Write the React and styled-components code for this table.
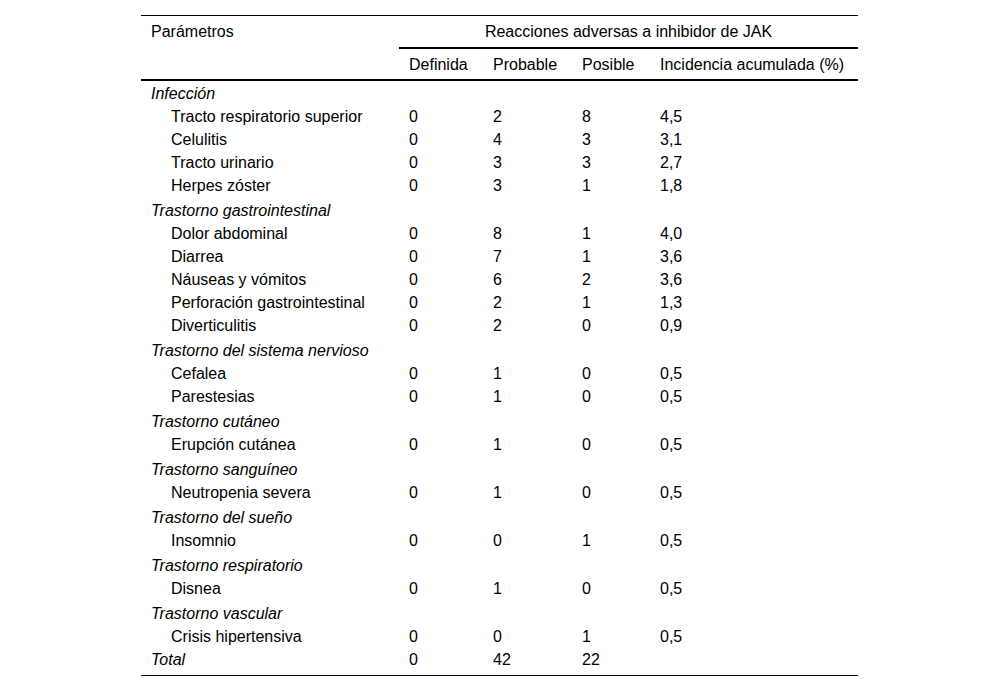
import React from 'react'
import styled, { createGlobalStyle } from 'styled-components'

const groups = [
    {
        name: 'Infección',
        items: [
            ['Tracto respiratorio superior', '0', '2', '8', '4,5'],
            ['Celulitis', '0', '4', '3', '3,1'],
            ['Tracto urinario', '0', '3', '3', '2,7'],
            ['Herpes zóster', '0', '3', '1', '1,8'],
        ],
    },
    {
        name: 'Trastorno gastrointestinal',
        items: [
            ['Dolor abdominal', '0', '8', '1', '4,0'],
            ['Diarrea', '0', '7', '1', '3,6'],
            ['Náuseas y vómitos', '0', '6', '2', '3,6'],
            ['Perforación gastrointestinal', '0', '2', '1', '1,3'],
            ['Diverticulitis', '0', '2', '0', '0,9'],
        ],
    },
    {
        name: 'Trastorno del sistema nervioso',
        items: [
            ['Cefalea', '0', '1', '0', '0,5'],
            ['Parestesias', '0', '1', '0', '0,5'],
        ],
    },
    {
        name: 'Trastorno cutáneo',
        items: [['Erupción cutánea', '0', '1', '0', '0,5']],
    },
    {
        name: 'Trastorno sanguíneo',
        items: [['Neutropenia severa', '0', '1', '0', '0,5']],
    },
    {
        name: 'Trastorno del sueño',
        items: [['Insomnio', '0', '0', '1', '0,5']],
    },
    {
        name: 'Trastorno respiratorio',
        items: [['Disnea', '0', '1', '0', '0,5']],
    },
    {
        name: 'Trastorno vascular',
        items: [['Crisis hipertensiva', '0', '0', '1', '0,5']],
    },
]

function App() {
    return (
        <>
            <GlobalStyle />
            <Table>
                <colgroup>
                    <col style={{ width: 258 }} />
                    <col style={{ width: 84 }} />
                    <col style={{ width: 89 }} />
                    <col style={{ width: 78 }} />
                    <col style={{ width: 208 }} />
                </colgroup>
                <thead>
                    <tr>
                        <HeadCell rowSpan={2}>Parámetros</HeadCell>
                        <HeadCell colSpan={4} $center>
                            Reacciones adversas a inhibidor de JAK
                        </HeadCell>
                    </tr>
                    <tr>
                        <SubHead>Definida</SubHead>
                        <SubHead>Probable</SubHead>
                        <SubHead>Posible</SubHead>
                        <SubHead>Incidencia acumulada (%)</SubHead>
                    </tr>
                </thead>
                <tbody>
                    {groups.map((g, gi) => (
                        <React.Fragment key={g.name}>
                            <tr>
                                <Cell colSpan={5} $italic $first={gi === 0}>{g.name}</Cell>
                            </tr>
                            {g.items.map((row) => (
                                <tr key={row[0]}>
                                    {row.map((v, i) => (
                                        <Cell key={i} $indent={i === 0}>{v}</Cell>
                                    ))}
                                </tr>
                            ))}
                        </React.Fragment>
                    ))}
                    <tr>
                        <Cell $italic $first $last>Total</Cell>
                        <Cell $last>0</Cell>
                        <Cell $last>42</Cell>
                        <Cell $last>22</Cell>
                        <Cell $last></Cell>
                    </tr>
                </tbody>
            </Table>
        </>
    )
}

export default App

const GlobalStyle = createGlobalStyle`
body{
    margin: 0;
    background: #fff;
    font-family: "Liberation Sans", Arial, sans-serif;
}
`

const Table = styled.table`
width: 717px;
margin: 15px 0 0 141px;
border-collapse: separate;
border-spacing: 0;
table-layout: fixed;
font-size: 16px;
line-height: 19px;
color: #000;
`

const HeadCell = styled.th`
font-weight: normal;
text-align: ${(p) => (p.$center ? 'center' : 'left')};
vertical-align: top;
padding: 6px 10px 6px;
border-top: 1px solid #000;
border-bottom: 2px solid #000;
white-space: nowrap;
`

const SubHead = styled.th`
font-weight: normal;
text-align: left;
padding: 6px 10px 5px;
border-bottom: 2px solid #000;
white-space: nowrap;
`

const Cell = styled.td`
padding: ${(p) => (p.$italic && !p.$first ? '5px' : '3px')} 10px ${(p) => (p.$last ? '6px' : '1px')};
padding-left: ${(p) => (p.$indent ? '30px' : '10px')};
font-style: ${(p) => (p.$italic ? 'italic' : 'normal')};
white-space: nowrap;
border-bottom: ${(p) => (p.$last ? '1px solid #000' : 'none')};
`
